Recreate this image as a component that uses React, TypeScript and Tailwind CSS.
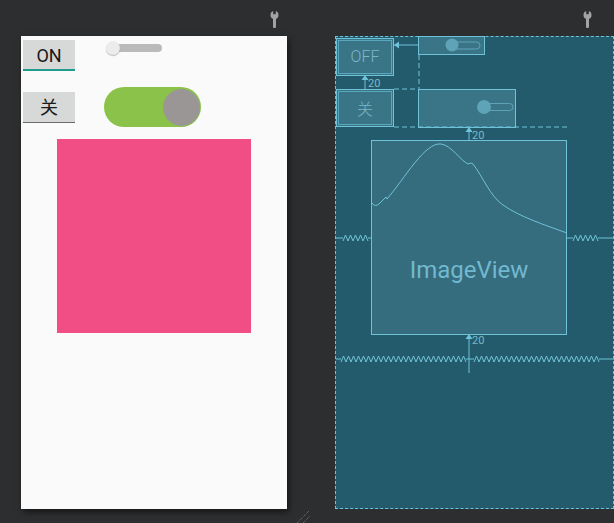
import React from "react";

const line = "#6fc3d8";

function Wrench() {
  return (
    <svg width="9" height="17" viewBox="0 0 9 17" className="block">
      <circle cx="4.5" cy="4" r="4" fill="#a3a3a3" />
      <rect x="3.2" y="-1" width="2.6" height="4.2" fill="#2d2e30" />
      <rect x="3" y="6" width="3" height="11" rx="1" fill="#a3a3a3" />
    </svg>
  );
}

function Spring({ width }: { width: number }) {
  // zigzag drawn as a single polyline, 5px period
  const pts: string[] = [];
  for (let x = 0, i = 0; x <= width; x += 2.5, i++) {
    pts.push(`${x},${i % 2 === 0 ? 3 : -3}`);
  }
  return <polyline points={pts.join(" ")} fill="none" stroke={line} strokeWidth="1" />;
}

function Blueprint() {
  return (
    <div className="relative h-[473px] w-[279px] border border-dashed border-[#6fc3d8] bg-[#235b6c] font-['Roboto',sans-serif]">
      {/* widget boxes */}
      <div className="absolute left-0 top-px flex h-[38px] w-[58px] items-center justify-center border border-[#6fc3d8] bg-[#3a7487] p-px">
        <div className="flex h-full w-full items-center justify-center border border-[#5aa6ba] text-[16px] font-light text-[#7fb6c6]">
          OFF
        </div>
      </div>
      <div className="absolute left-0 top-[52px] flex h-[38px] w-[58px] items-center justify-center border border-[#6fc3d8] bg-[#3a7487] p-px">
        <div className="flex h-full w-full items-center justify-center border border-[#5aa6ba] text-[16px] text-[#7fb6c6] font-['Noto_Sans_CJK_SC',sans-serif] font-light">
          关
        </div>
      </div>
      <div className="absolute left-[82px] -top-px h-[19px] w-[67px] border border-[#6fc3d8] bg-[#3a7487]" />
      <div className="absolute left-[82px] top-[52px] h-[39px] w-[98px] border border-[#6fc3d8] bg-[#3a7487]" />
      <div className="absolute left-[35px] top-[103px] flex h-[195px] w-[196px] items-center justify-center border border-[#6fc3d8] bg-[#356c7e]">
        <span className="mt-[65px] text-[24px] text-[#72b9cf]">ImageView</span>
      </div>

      <svg className="absolute left-[-1px] top-[-1px]" width="280" height="474" viewBox="0 0 280 474">
        {/* image placeholder curve */}
        <path
          d="M37 167 Q40 172 45 167 L51 161 L52 163 C70 142 90 106 106 108 C116 109 126 125 133 128 Q136 126 138 128 C148 141 155 160 168 169 C185 181 210 189 232 197"
          fill="none"
          stroke={line}
          strokeWidth="1"
        />
        {/* slider glyphs */}
        <circle cx="117" cy="9" r="6.5" fill="#5ea3b8" />
        <rect x="117" y="6" width="28" height="7" rx="3.5" fill="none" stroke="#5ea3b8" />
        <circle cx="149" cy="71" r="7" fill="#5ea3b8" />
        <rect x="149" y="67.5" width="29" height="7" rx="3.5" fill="none" stroke="#5ea3b8" />

        {/* constraint arrow to OFF */}
        <line x1="59" y1="9" x2="83" y2="9" stroke={line} />
        <path d="M59 9 L64 5.5 L64 12.5 Z" fill={line} />

        {/* dashed guides */}
        <line x1="84" y1="19" x2="84" y2="53" stroke={line} strokeDasharray="5 3" />
        <line x1="59" y1="53" x2="83" y2="53" stroke={line} strokeDasharray="5 3" />
        <line x1="59" y1="91" x2="232" y2="91" stroke={line} strokeDasharray="5 3" />

        {/* 20 margins */}
        <line x1="30" y1="40" x2="30" y2="53" stroke={line} />
        <path d="M30 39 L26.5 44 L33.5 44 Z" fill={line} />
        <text x="33" y="51" fontSize="11" fill="#7fb6c6">20</text>

        <line x1="134" y1="92" x2="134" y2="104" stroke={line} />
        <path d="M134 91 L130.5 96 L137.5 96 Z" fill={line} />
        <text x="137" y="103" fontSize="11" fill="#7fb6c6">20</text>

        <line x1="134" y1="299" x2="134" y2="337" stroke={line} />
        <path d="M134 298 L130.5 303 L137.5 303 Z" fill={line} />
        <text x="137" y="308" fontSize="11" fill="#7fb6c6">20</text>

        {/* springs */}
        <g transform="translate(1 202)">
          <line x1="0" y1="0" x2="7" y2="0" stroke={line} />
          <g transform="translate(7 0)">
            <Spring width={25} />
          </g>
          <line x1="32" y1="0" x2="35" y2="0" stroke={line} />
        </g>
        <g transform="translate(232 202)">
          <line x1="0" y1="0" x2="6" y2="0" stroke={line} />
          <g transform="translate(6 0)">
            <Spring width={25} />
          </g>
          <line x1="31" y1="0" x2="47" y2="0" stroke={line} />
        </g>
        <g transform="translate(1 323)">
          <line x1="0" y1="0" x2="5" y2="0" stroke={line} />
          <g transform="translate(5 0)">
            <Spring width={125} />
          </g>
          <line x1="130" y1="0" x2="138" y2="0" stroke={line} />
          <g transform="translate(138 0)">
            <Spring width={125} />
          </g>
          <line x1="263" y1="0" x2="278" y2="0" stroke={line} />
        </g>
      </svg>
    </div>
  );
}

function Design() {
  return (
    <div className="h-[473px] w-[266px] bg-[#fafafa] shadow-[2px_3px_6px_rgba(0,0,0,0.55)] font-['Roboto',sans-serif]">
      <div className="flex items-start pl-[2px] pt-[4px]">
        <div className="flex h-[31px] w-[52px] items-center justify-center border-b-2 border-[#1f9c8c] bg-[#d7d8d8] pt-[2px] text-[18px] text-[#161616]">
          ON
        </div>
        <div className="relative ml-[31px] mt-[1px] h-[14px] w-[56px]">
          <div className="absolute left-[3px] right-0 top-[3px] h-[8px] rounded-full bg-[#bababa]" />
          <div className="absolute left-0 top-0 h-[14px] w-[14px] rounded-full bg-[#ececec] shadow-[0_1px_1px_rgba(0,0,0,0.25)]" />
        </div>
      </div>
      <div className="mt-[16px] flex items-center pl-[2px]">
        <div className="flex h-[31px] w-[52px] items-center justify-center border-b-[1.5px] border-[#6b6b6b] bg-[#d7d8d8] text-[18px] text-[#1b1b1b] font-['Noto_Sans_CJK_SC',sans-serif]">
          关
        </div>
        <div className="ml-[29px] flex h-[40px] w-[97px] items-center justify-end rounded-full bg-[#8bc34a] pr-[1px]">
          <div className="h-[37px] w-[37px] rounded-full bg-[#9b9696]" />
        </div>
      </div>
      <div className="ml-[36px] mt-[12px] h-[194px] w-[194px] bg-[#f04e84]" />
    </div>
  );
}

export default function App() {
  return (
    <div className="relative h-[523px] w-[614px] overflow-hidden bg-[#2d2e30]">
      <div className="flex h-[36px] items-end justify-between pb-[8px] pl-[270px] pr-[22px]">
        <Wrench />
        <Wrench />
      </div>
      <div className="flex items-start pl-[21px]">
        <Design />
        <div className="ml-[48px]">
          <Blueprint />
        </div>
      </div>
      <svg className="absolute left-[297px] top-[510px]" width="14" height="13" viewBox="0 0 14 13">
        <line x1="0" y1="13" x2="12" y2="1" stroke="#7a7a7a" strokeDasharray="1 1" />
        <line x1="6" y1="13" x2="13" y2="6" stroke="#7a7a7a" strokeDasharray="1 1" />
      </svg>
    </div>
  );
}
